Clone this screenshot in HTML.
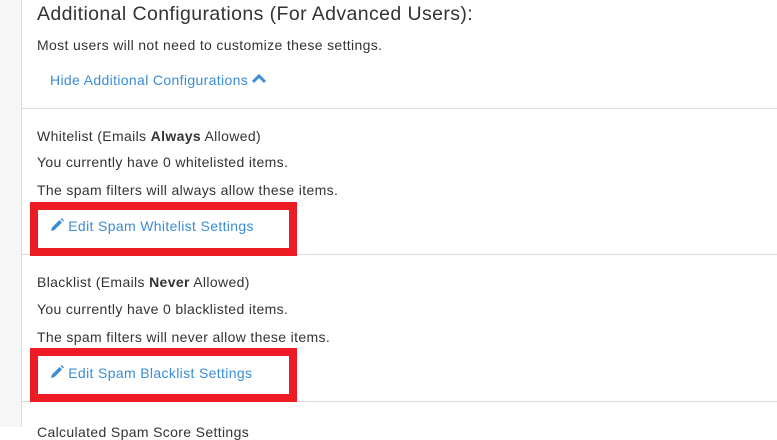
<!DOCTYPE html>
<html><head><style>
body{margin:0;width:777px;height:427px;overflow:hidden;background:#fff;font-family:"Liberation Sans",sans-serif;color:#333;position:relative}
.strip{position:absolute;left:0;top:0;width:21px;height:427px;background:#f6f6f6;border-right:1px solid #ddd}
.t{position:absolute;left:37px;font-size:14px;white-space:nowrap;letter-spacing:0.35px}
.h{font-size:19.5px;color:#333;letter-spacing:0.4px}
.a{color:#3a8dd6}
.hr{position:absolute;left:22px;right:0;height:1px;background:#ddd}
.box{position:absolute;left:30px;width:251px;height:38px;border:8px solid #ed1c24}
</style></head><body>
<div class="strip"></div>
<div class="t h" style="top:3px">Additional Configurations (For Advanced Users):</div>
<div class="t" style="top:37px">Most users will not need to customize these settings.</div>
<div class="t a" style="top:72px;left:50px">Hide Additional Configurations <svg width="14" height="10" viewBox="0 0 14 10" style="vertical-align:1px"><path d="M1 8 L7 2 L13 8" stroke="#3a8dd6" stroke-width="3" fill="none"/></svg></div>
<div class="hr" style="top:108px"></div>
<div class="t" style="top:128px">Whitelist (Emails <b>Always</b> Allowed)</div>
<div class="t" style="top:154px">You currently have 0 whitelisted items.</div>
<div class="t" style="top:182px">The spam filters will always allow these items.</div>
<div class="hr" style="top:254px"></div>
<div class="box" style="top:202px"></div>
<div class="t a" style="top:218px;left:50px"><svg width="14" height="14" viewBox="0 0 14 14" style="vertical-align:-1px"><path d="M1 13 L2 9.5 L9.5 2 L12 4.5 L4.5 12 Z" fill="#3a8dd6"/><path d="M10.5 1 L11.5 0 L14 2.5 L13 3.5Z" fill="#3a8dd6"/></svg> Edit Spam Whitelist Settings</div>
<div class="t" style="top:274px">Blacklist (Emails <b>Never</b> Allowed)</div>
<div class="t" style="top:301px">You currently have 0 blacklisted items.</div>
<div class="t" style="top:329px">The spam filters will never allow these items.</div>
<div class="hr" style="top:401px"></div>
<div class="box" style="top:348px"></div>
<div class="t a" style="top:365px;left:50px"><svg width="14" height="14" viewBox="0 0 14 14" style="vertical-align:-1px"><path d="M1 13 L2 9.5 L9.5 2 L12 4.5 L4.5 12 Z" fill="#3a8dd6"/><path d="M10.5 1 L11.5 0 L14 2.5 L13 3.5Z" fill="#3a8dd6"/></svg> Edit Spam Blacklist Settings</div>
<div class="t" style="top:424px">Calculated Spam Score Settings</div>
</body></html>
